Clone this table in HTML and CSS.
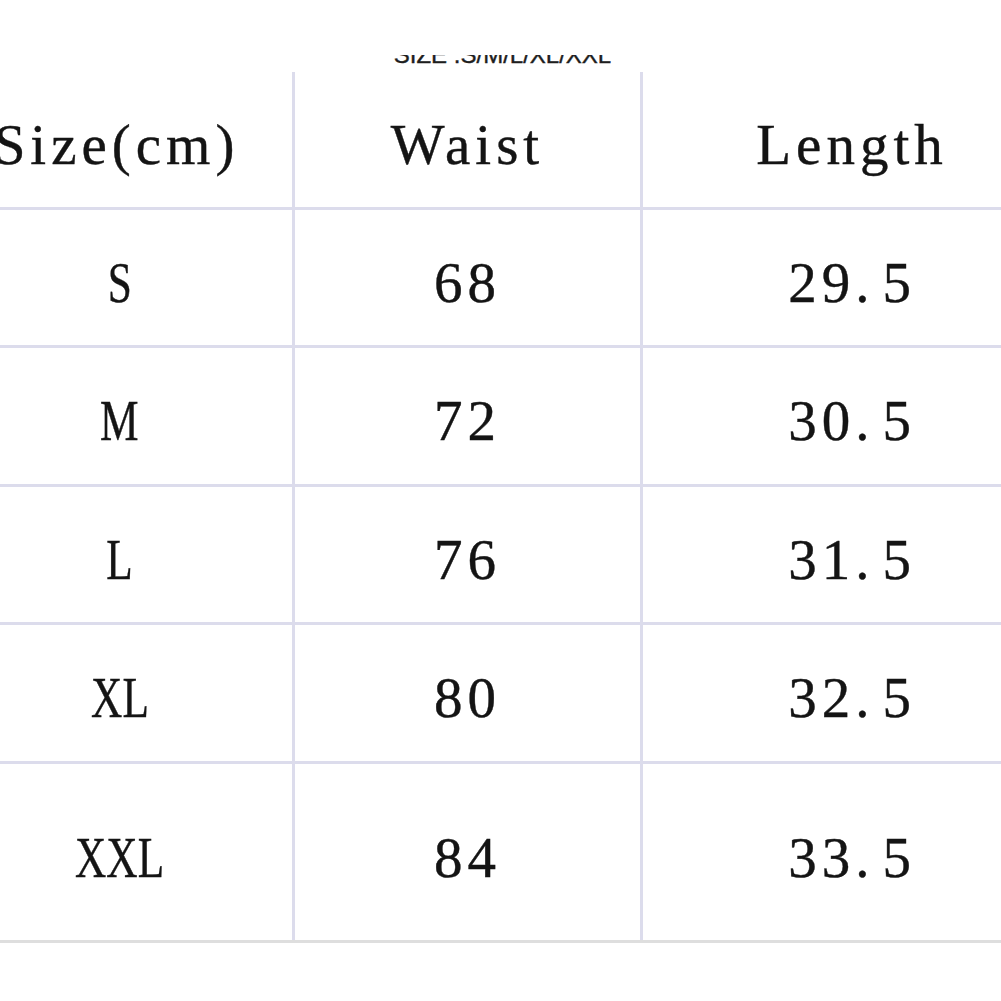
FILE: index.html
```html
<!DOCTYPE html>
<html>
<head>
<meta charset="utf-8">
<link rel="stylesheet" href="styles.css">
</head>
<body>
<div class="page">
  <div class="caption"><span class="caption-text">SIZE :S/M/L/XL/XXL</span></div>
  <div class="table">
    <div class="row head">
      <div class="cell">Size(cm)</div>
      <div class="cell">Waist</div>
      <div class="cell">Length</div>
    </div>
    <div class="row">
      <div class="cell"><span class="narrow">S</span></div>
      <div class="cell">68</div>
      <div class="cell">29<span class="dot">.</span>5</div>
    </div>
    <div class="row tall1">
      <div class="cell"><span class="narrow">M</span></div>
      <div class="cell">72</div>
      <div class="cell">30<span class="dot">.</span>5</div>
    </div>
    <div class="row">
      <div class="cell"><span class="narrow">L</span></div>
      <div class="cell">76</div>
      <div class="cell">31<span class="dot">.</span>5</div>
    </div>
    <div class="row tall1">
      <div class="cell"><span class="narrow">XL</span></div>
      <div class="cell">80</div>
      <div class="cell">32<span class="dot">.</span>5</div>
    </div>
    <div class="row last">
      <div class="cell"><span class="narrow">XXL</span></div>
      <div class="cell">84</div>
      <div class="cell">33<span class="dot">.</span>5</div>
    </div>
  </div>
</div>
</body>
</html>
```
FILE: styles.css
```css
html, body {
  margin: 0;
  padding: 0;
  background: #ffffff;
  overflow: hidden;
}
.page {
  width: 1001px;
  height: 1001px;
  overflow: hidden;
  padding-top: 55px;
  box-sizing: border-box;
}
.caption {
  height: 12px;
  overflow: hidden;
  display: flex;
  align-items: flex-end;
  justify-content: center;
  padding-left: 4px;
}
.caption-text {
  font-family: "Liberation Sans", Arial, sans-serif;
  font-size: 24px;
  line-height: 24px;
  color: #1e1e1e;
  white-space: nowrap;
  -webkit-text-stroke: 0.4px #1e1e1e;
}
.table {
  margin-top: 5px;
  margin-left: -59px;
  width: 1120px;
  font-family: "Liberation Serif", "Times New Roman", serif;
  font-size: 57px;
  letter-spacing: 5px;
  color: #141414;
  -webkit-text-stroke: 0.4px #141414;
}
.row {
  display: grid;
  grid-template-columns: 354px 348px 418px;
  height: 138px;
  box-sizing: border-box;
  border-bottom: 3px solid #dcdcec;
}
.row.tall1 {
  height: 139px;
}
.row.last {
  height: 179px;
  border-bottom-color: #dedede;
}
.cell {
  border-right: 3px solid #dcdcec;
  text-align: center;
  line-height: 57px;
  padding-top: 44px;
  white-space: nowrap;
}
.row.last .cell {
  padding-top: 65px;
}
.cell:last-child {
  border-right: none;
}
.narrow {
  display: inline-block;
  letter-spacing: 0;
  transform: scaleX(0.76);
  margin-left: 6px;
}
.dot {
  margin-right: 8px;
}
```
